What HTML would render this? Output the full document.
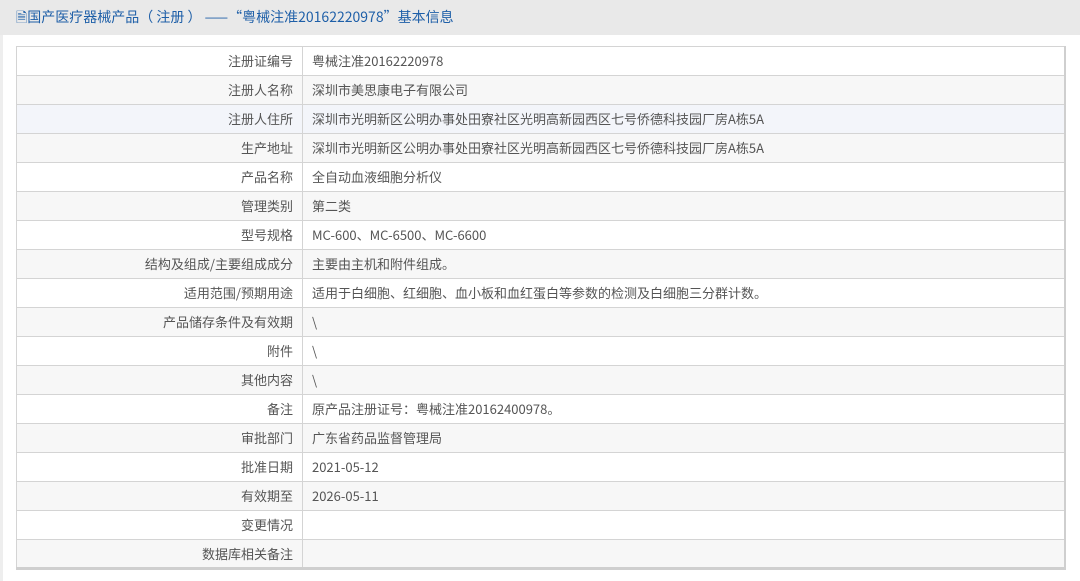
<!DOCTYPE html>
<html><head><meta charset="utf-8"><style>
body{margin:0;width:1080px;height:581px;background:#fff;font-family:"Noto Sans CJK SC","Liberation Sans",sans-serif;overflow:hidden;position:relative}
.lstrip{position:absolute;left:0;top:0;width:3px;height:581px;background:#eeeeee}
.hd{position:absolute;left:0;top:0;width:1080px;height:35px;background:#e9e9e9;color:#1e5fa8;font-size:14px;line-height:35px;padding-left:16px;box-sizing:border-box;white-space:pre}
table{position:absolute;left:16px;top:46px;width:1050px;border-collapse:collapse;border:1px solid #cfcfcf;border-right:2px solid #cfcfcf;border-bottom:3px solid #cfcfcf;font-size:13px;color:#555}
tr{height:29px}
td{height:29px;border:1px solid #d4d4d4;padding:0 9px;box-sizing:border-box;line-height:16px}
td.l{width:286px;text-align:right}
tr:nth-child(even) td{background:#f7f7f7}
tr.h td{background:#f3f5fa}
</style></head><body>
<div class="lstrip"></div>
<div class="hd">&#x1F5CE;国产医疗器械产品（ 注册 ） ——“粤械注准20162220978”基本信息</div>
<table>
<tr><td class="l">注册证编号</td><td>粤械注准20162220978</td></tr>
<tr><td class="l">注册人名称</td><td>深圳市美思康电子有限公司</td></tr>
<tr class="h"><td class="l">注册人住所</td><td>深圳市光明新区公明办事处田寮社区光明高新园西区七号侨德科技园厂房A栋5A</td></tr>
<tr><td class="l">生产地址</td><td>深圳市光明新区公明办事处田寮社区光明高新园西区七号侨德科技园厂房A栋5A</td></tr>
<tr><td class="l">产品名称</td><td>全自动血液细胞分析仪</td></tr>
<tr><td class="l">管理类别</td><td>第二类</td></tr>
<tr><td class="l">型号规格</td><td>MC-600、MC-6500、MC-6600</td></tr>
<tr><td class="l">结构及组成/主要组成成分</td><td>主要由主机和附件组成。</td></tr>
<tr><td class="l">适用范围/预期用途</td><td>适用于白细胞、红细胞、血小板和血红蛋白等参数的检测及白细胞三分群计数。</td></tr>
<tr><td class="l">产品储存条件及有效期</td><td>\</td></tr>
<tr><td class="l">附件</td><td>\</td></tr>
<tr><td class="l">其他内容</td><td>\</td></tr>
<tr><td class="l">备注</td><td>原产品注册证号：粤械注准20162400978。</td></tr>
<tr><td class="l">审批部门</td><td>广东省药品监督管理局</td></tr>
<tr><td class="l">批准日期</td><td>2021-05-12</td></tr>
<tr><td class="l">有效期至</td><td>2026-05-11</td></tr>
<tr><td class="l">变更情况</td><td></td></tr>
<tr><td class="l">数据库相关备注</td><td></td></tr>
</table>
</body></html>
